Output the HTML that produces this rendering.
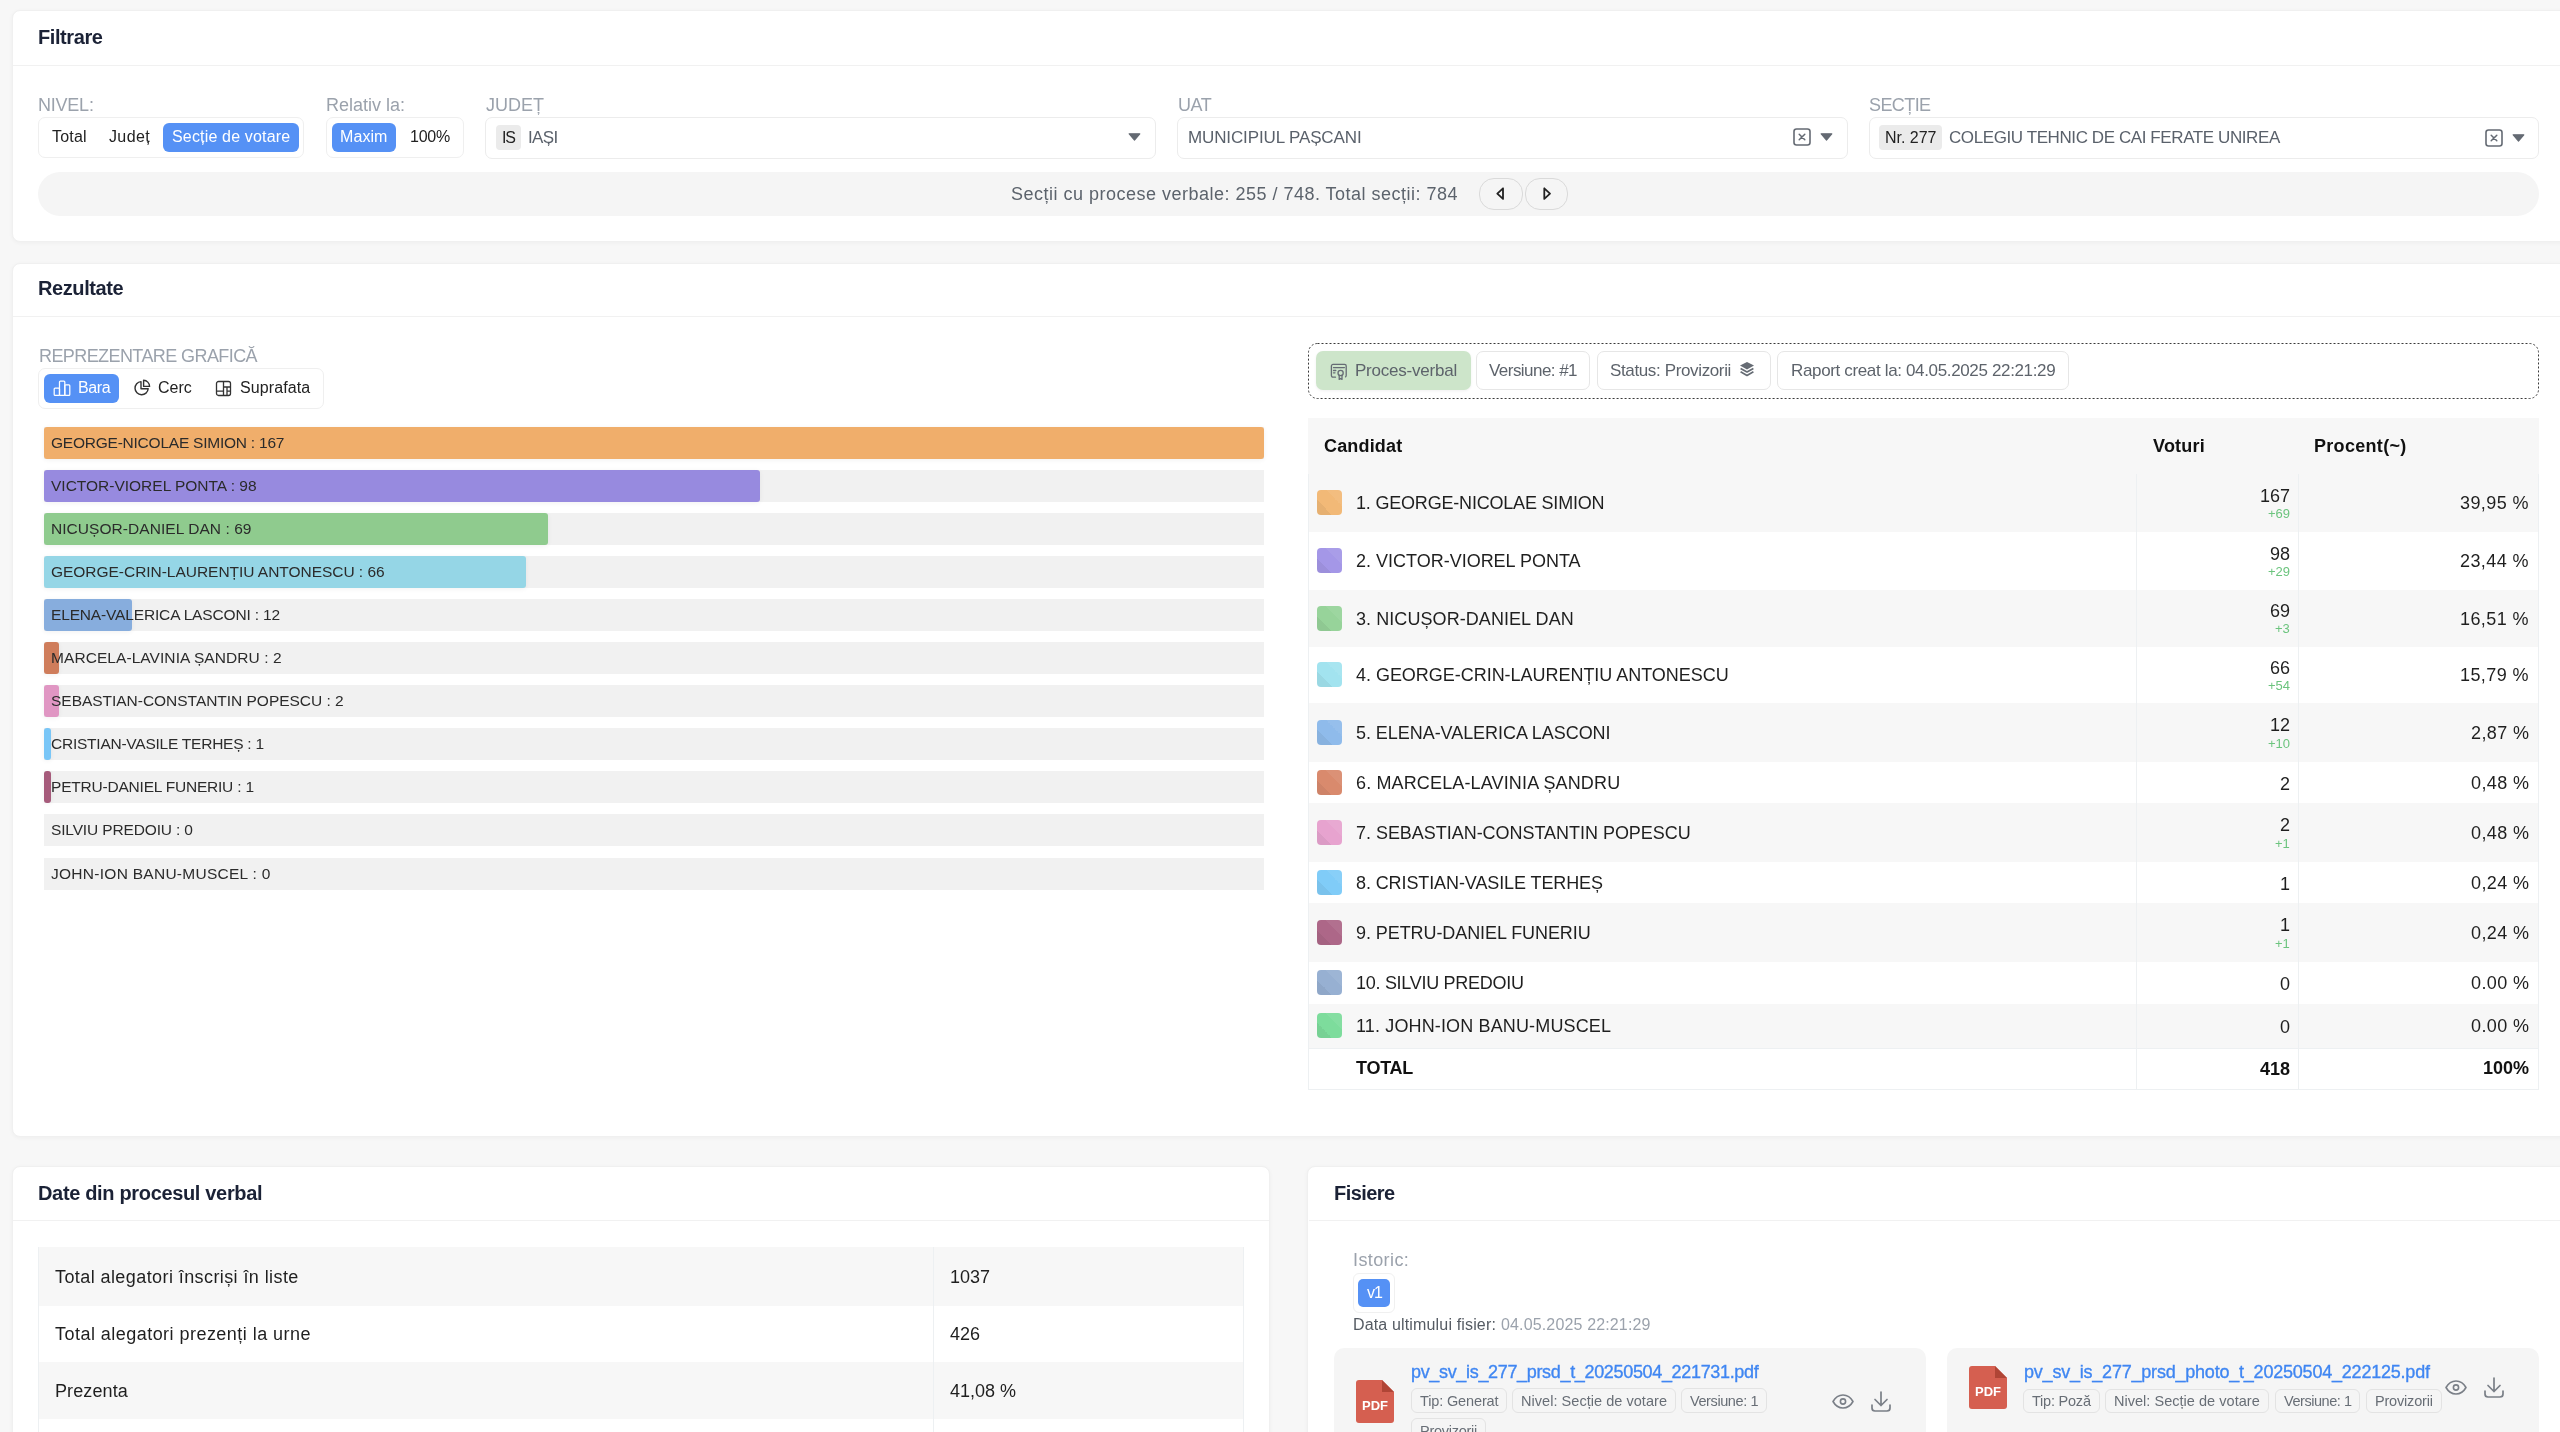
<!DOCTYPE html>
<html><head><meta charset="utf-8"><title>Rezultate</title>
<style>
html,body{margin:0;padding:0;}
body{width:2560px;height:1432px;overflow:hidden;background:#f7f7f7;position:relative;font-family:"Liberation Sans",sans-serif;}
.t{position:absolute;white-space:pre;will-change:transform;}
.b{position:absolute;}
</style></head><body>
<div class=b style="left:12px;top:10px;width:2588px;height:232px;background:#fff;border-radius:8px;box-shadow:0 1px 4px rgba(0,0,0,0.04);border:1px solid #f0f0f0;box-sizing:border-box;"></div><div class=b style="left:13px;top:65px;width:2587px;height:1px;background:#f1f1f1"></div><div class=b style="left:12px;top:263px;width:2588px;height:874px;background:#fff;border-radius:8px;box-shadow:0 1px 4px rgba(0,0,0,0.04);border:1px solid #f0f0f0;box-sizing:border-box;"></div><div class=b style="left:13px;top:316px;width:2587px;height:1px;background:#f1f1f1"></div><div class=b style="left:12px;top:1166px;width:1258px;height:334px;background:#fff;border-radius:8px;box-shadow:0 1px 4px rgba(0,0,0,0.04);border:1px solid #f0f0f0;box-sizing:border-box;"></div><div class=b style="left:13px;top:1220px;width:1256px;height:1px;background:#f1f1f1"></div><div class=b style="left:1307px;top:1166px;width:1293px;height:334px;background:#fff;border-radius:8px;box-shadow:0 1px 4px rgba(0,0,0,0.04);border:1px solid #f0f0f0;box-sizing:border-box;"></div><div class=b style="left:1309px;top:1220px;width:1291px;height:1px;background:#f1f1f1"></div><div class=t style="top:24.57px;font-size:20px;line-height:25px;font-weight:600;color:#1b2236;letter-spacing:-0.414px;left:38px;">Filtrare</div><div class=t style="top:276.17px;font-size:20px;line-height:25px;font-weight:600;color:#1b2236;letter-spacing:-0.412px;left:38px;">Rezultate</div><div class=t style="top:1180.57px;font-size:20px;line-height:25px;font-weight:600;color:#1b2236;letter-spacing:-0.337px;left:38px;">Date din procesul verbal</div><div class=t style="top:1180.87px;font-size:20px;line-height:25px;font-weight:600;color:#1b2236;letter-spacing:-0.555px;left:1334px;">Fisiere</div><div class=t style="top:93.56px;font-size:18px;line-height:22px;font-weight:400;color:#9ba2ac;letter-spacing:-0.222px;left:38px;">NIVEL:</div><div class=t style="top:93.66px;font-size:18px;line-height:22px;font-weight:400;color:#9ba2ac;letter-spacing:-0.003px;left:326.4px;">Relativ la:</div><div class=t style="top:93.66px;font-size:18px;line-height:22px;font-weight:400;color:#9ba2ac;left:485.6px;">JUDEȚ</div><div class=t style="top:93.66px;font-size:18px;line-height:22px;font-weight:400;color:#9ba2ac;letter-spacing:-0.424px;left:1177.5px;">UAT</div><div class=t style="top:93.66px;font-size:18px;line-height:22px;font-weight:400;color:#9ba2ac;letter-spacing:-0.586px;left:1869px;">SECȚIE</div><div class=b style="left:38px;top:117px;width:266px;height:41px;border:1px solid #efefef;border-radius:7px;box-sizing:border-box;background:#fff;"></div><div class=b style="left:163px;top:123px;width:136px;height:29px;background:#5591f5;border-radius:6px"></div><div class=t style="top:127.26px;font-size:16px;line-height:20px;font-weight:400;color:#222;letter-spacing:0.181px;left:52.3px;">Total</div><div class=t style="top:127.26px;font-size:16px;line-height:20px;font-weight:400;color:#222;letter-spacing:0.372px;left:109px;">Județ</div><div class=t style="top:127.26px;font-size:16px;line-height:20px;font-weight:400;color:#fff;letter-spacing:0.167px;left:172.2px;">Secție de votare</div><div class=b style="left:326px;top:117px;width:138px;height:41px;border:1px solid #efefef;border-radius:7px;box-sizing:border-box;background:#fff;"></div><div class=b style="left:332px;top:123px;width:64px;height:29px;background:#5591f5;border-radius:6px"></div><div class=t style="top:127.26px;font-size:16px;line-height:20px;font-weight:400;color:#fff;letter-spacing:0.078px;left:339.9px;">Maxim</div><div class=t style="top:127.26px;font-size:16px;line-height:20px;font-weight:400;color:#222;letter-spacing:-0.230px;left:409.6px;">100%</div><div class=b style="left:485px;top:117px;width:671px;height:42px;border:1px solid #ececec;border-radius:7px;box-sizing:border-box;background:#fff;"></div><div class=b style="left:496px;top:125px;width:25px;height:25px;background:#ebebeb;border-radius:4px"></div><div class=t style="top:127.76px;font-size:16px;line-height:20px;font-weight:400;color:#222;letter-spacing:-1.112px;left:501.6px;">IS</div><div class=t style="top:127.01px;font-size:17px;line-height:21px;font-weight:400;color:#5a616b;letter-spacing:-0.606px;left:527.6px;">IAȘI</div><svg class=b style='left:1127.5px;top:133px' width='13' height='8' viewBox='0 0 13 8'><path d='M1.2 0.8 H11.8 L6.5 7 Z' fill='#646a73' stroke='#646a73' stroke-width='1.2' stroke-linejoin='round'/></svg><div class=b style="left:1177px;top:117px;width:671px;height:42px;border:1px solid #ececec;border-radius:7px;box-sizing:border-box;background:#fff;"></div><div class=t style="top:127.01px;font-size:17px;line-height:21px;font-weight:400;color:#5a616b;letter-spacing:-0.122px;left:1188.4px;">MUNICIPIUL PAȘCANI</div><svg class=b style='left:1793px;top:128px' width='18' height='18' viewBox='0 0 18 18'><rect x='1' y='1' width='16' height='16' rx='2.5' fill='none' stroke='#646a73' stroke-width='1.6'/><path d='M6.2 6.2 L11.8 11.8 M11.8 6.2 L6.2 11.8' stroke='#646a73' stroke-width='1.5' stroke-linecap='round'/></svg><svg class=b style='left:1820px;top:133px' width='13' height='8' viewBox='0 0 13 8'><path d='M1.2 0.8 H11.8 L6.5 7 Z' fill='#646a73' stroke='#646a73' stroke-width='1.2' stroke-linejoin='round'/></svg><div class=b style="left:1869px;top:117px;width:670px;height:42px;border:1px solid #ececec;border-radius:7px;box-sizing:border-box;background:#fff;"></div><div class=b style="left:1879px;top:125px;width:63px;height:25px;background:#ebebeb;border-radius:4px"></div><div class=t style="top:127.76px;font-size:16px;line-height:20px;font-weight:400;color:#222;letter-spacing:-0.028px;left:1884.6px;">Nr. 277</div><div class=t style="top:127.21px;font-size:17px;line-height:21px;font-weight:400;color:#5a616b;letter-spacing:-0.408px;left:1948.9px;">COLEGIU TEHNIC DE CAI FERATE UNIREA</div><svg class=b style='left:2485px;top:129px' width='18' height='18' viewBox='0 0 18 18'><rect x='1' y='1' width='16' height='16' rx='2.5' fill='none' stroke='#646a73' stroke-width='1.6'/><path d='M6.2 6.2 L11.8 11.8 M11.8 6.2 L6.2 11.8' stroke='#646a73' stroke-width='1.5' stroke-linecap='round'/></svg><svg class=b style='left:2512px;top:134px' width='13' height='8' viewBox='0 0 13 8'><path d='M1.2 0.8 H11.8 L6.5 7 Z' fill='#646a73' stroke='#646a73' stroke-width='1.2' stroke-linejoin='round'/></svg><div class=b style="left:38px;top:172px;width:2501px;height:44px;background:#f5f5f5;border-radius:22px"></div><div class=t style="top:182.56px;font-size:18px;line-height:22px;font-weight:400;color:#5c636c;letter-spacing:0.492px;left:1011px;">Secții cu procese verbale: 255 / 748. Total secții: 784</div><div class=b style="left:1479px;top:178px;width:44px;height:32px;border:1px solid #dadada;border-radius:15px;box-sizing:border-box;"></div><div class=b style="left:1525px;top:178px;width:43px;height:32px;border:1px solid #dadada;border-radius:15px;box-sizing:border-box;"></div><svg class=b style='left:1495px;top:186px' width='10' height='15' viewBox='0 0 10 15'><path d='M8 2.3 L8 12.9 L2.3 7.6 Z' fill='none' stroke='#222' stroke-width='1.8' stroke-linejoin='round'/></svg><svg class=b style='left:1542px;top:186px' width='10' height='15' viewBox='0 0 10 15'><path d='M2.3 2.3 L2.3 12.9 L8 7.6 Z' fill='none' stroke='#222' stroke-width='1.8' stroke-linejoin='round'/></svg><div class=t style="top:344.66px;font-size:18px;line-height:22px;font-weight:400;color:#9ba2ac;letter-spacing:-0.585px;left:38.8px;">REPREZENTARE GRAFICĂ</div><div class=b style="left:38px;top:368px;width:286px;height:41px;border:1px solid #efefef;border-radius:7px;box-sizing:border-box;background:#fff;"></div><div class=b style="left:44px;top:374px;width:75px;height:29px;background:#5591f5;border-radius:6px"></div><svg class=b style='left:53px;top:380px' width='18' height='17' viewBox='0 0 18 17'><g fill='none' stroke='#fff' stroke-width='1.25' stroke-linejoin='round'><rect x='1.2' y='8.2' width='5.3' height='7.2' rx='0.9'/><rect x='6.5' y='1.2' width='5.3' height='14.2' rx='0.9'/><rect x='11.8' y='4.8' width='5' height='10.6' rx='0.9'/></g></svg><div class=t style="top:378.46px;font-size:16px;line-height:20px;font-weight:400;color:#fff;letter-spacing:-0.374px;left:78px;">Bara</div><svg class=b style='left:133px;top:379px' width='18' height='18' viewBox='0 0 18 18'><g fill='none' stroke='#333' stroke-width='1.4' stroke-linejoin='round'><path d='M8 2.6 A6.6 6.6 0 1 0 15.2 9.8 H8 Z'/><path d='M10.6 1.2 V7.4 H16.6 A6.4 6.4 0 0 0 10.6 1.2 Z'/></g></svg><div class=t style="top:378.46px;font-size:16px;line-height:20px;font-weight:400;color:#222;letter-spacing:-0.020px;left:158px;">Cerc</div><svg class=b style='left:215px;top:380px' width='17' height='17' viewBox='0 0 17 17'><g fill='none' stroke='#333' stroke-width='1.3' stroke-linejoin='round'><rect x='1.5' y='1.5' width='14' height='14' rx='2'/><path d='M8.5 1.5 V15.5 M1.5 11.2 H8.5 M8.5 7 H15.5 M12 7 V15.5 M12 11.2 H15.5'/></g></svg><div class=t style="top:378.46px;font-size:16px;line-height:20px;font-weight:400;color:#222;letter-spacing:0.090px;left:239.8px;">Suprafata</div><div class=b style="left:44px;top:427px;width:1220px;height:32px;background:#f1f1f1"></div><div class=b style="left:44px;top:427px;width:1220.0px;height:32px;background:#f0ae6b;border-radius:3px;box-shadow:0 1px 5px rgba(0,0,0,0.06)"></div><div class=t style="top:432.63px;font-size:15.5px;line-height:19px;font-weight:400;color:#2b2b2b;letter-spacing:-0.232px;left:51px;">GEORGE-NICOLAE SIMION : 167</div><div class=b style="left:44px;top:470px;width:1220px;height:32px;background:#f1f1f1"></div><div class=b style="left:44px;top:470px;width:715.9px;height:32px;background:#978adf;border-radius:3px;box-shadow:0 1px 5px rgba(0,0,0,0.06)"></div><div class=t style="top:475.63px;font-size:15.5px;line-height:19px;font-weight:400;color:#2b2b2b;letter-spacing:-0.003px;left:51px;">VICTOR-VIOREL PONTA : 98</div><div class=b style="left:44px;top:513px;width:1220px;height:32px;background:#f1f1f1"></div><div class=b style="left:44px;top:513px;width:504.1px;height:32px;background:#8fcb8e;border-radius:3px;box-shadow:0 1px 5px rgba(0,0,0,0.06)"></div><div class=t style="top:518.63px;font-size:15.5px;line-height:19px;font-weight:400;color:#2b2b2b;letter-spacing:0.054px;left:51px;">NICUȘOR-DANIEL DAN : 69</div><div class=b style="left:44px;top:556px;width:1220px;height:32px;background:#f1f1f1"></div><div class=b style="left:44px;top:556px;width:482.20000000000005px;height:32px;background:#95d6e6;border-radius:3px;box-shadow:0 1px 5px rgba(0,0,0,0.06)"></div><div class=t style="top:561.63px;font-size:15.5px;line-height:19px;font-weight:400;color:#2b2b2b;letter-spacing:-0.032px;left:51px;">GEORGE-CRIN-LAURENȚIU ANTONESCU : 66</div><div class=b style="left:44px;top:599px;width:1220px;height:32px;background:#f1f1f1"></div><div class=b style="left:44px;top:599px;width:87.69999999999999px;height:32px;background:#87addd;border-radius:3px;box-shadow:0 1px 5px rgba(0,0,0,0.06)"></div><div class=t style="top:604.63px;font-size:15.5px;line-height:19px;font-weight:400;color:#2b2b2b;letter-spacing:-0.155px;left:51px;">ELENA-VALERICA LASCONI : 12</div><div class=b style="left:44px;top:642px;width:1220px;height:32px;background:#f1f1f1"></div><div class=b style="left:44px;top:642px;width:14.600000000000001px;height:32px;background:#cf7d5b;border-radius:3px;box-shadow:0 1px 5px rgba(0,0,0,0.06)"></div><div class=t style="top:647.63px;font-size:15.5px;line-height:19px;font-weight:400;color:#2b2b2b;letter-spacing:0.068px;left:51px;">MARCELA-LAVINIA ȘANDRU : 2</div><div class=b style="left:44px;top:685px;width:1220px;height:32px;background:#f1f1f1"></div><div class=b style="left:44px;top:685px;width:14.600000000000001px;height:32px;background:#e096c3;border-radius:3px;box-shadow:0 1px 5px rgba(0,0,0,0.06)"></div><div class=t style="top:690.63px;font-size:15.5px;line-height:19px;font-weight:400;color:#2b2b2b;letter-spacing:-0.025px;left:51px;">SEBASTIAN-CONSTANTIN POPESCU : 2</div><div class=b style="left:44px;top:728px;width:1220px;height:32px;background:#f1f1f1"></div><div class=b style="left:44px;top:728px;width:7.299999999999997px;height:32px;background:#79c6f7;border-radius:3px;box-shadow:0 1px 5px rgba(0,0,0,0.06)"></div><div class=t style="top:733.63px;font-size:15.5px;line-height:19px;font-weight:400;color:#2b2b2b;letter-spacing:-0.238px;left:51px;">CRISTIAN-VASILE TERHEȘ : 1</div><div class=b style="left:44px;top:771px;width:1220px;height:32px;background:#f1f1f1"></div><div class=b style="left:44px;top:771px;width:7.299999999999997px;height:32px;background:#a65b7b;border-radius:3px;box-shadow:0 1px 5px rgba(0,0,0,0.06)"></div><div class=t style="top:776.63px;font-size:15.5px;line-height:19px;font-weight:400;color:#2b2b2b;letter-spacing:-0.210px;left:51px;">PETRU-DANIEL FUNERIU : 1</div><div class=b style="left:44px;top:814px;width:1220px;height:32px;background:#f1f1f1"></div><div class=t style="top:819.63px;font-size:15.5px;line-height:19px;font-weight:400;color:#2b2b2b;letter-spacing:-0.146px;left:51px;">SILVIU PREDOIU : 0</div><div class=b style="left:44px;top:858px;width:1220px;height:32px;background:#f1f1f1"></div><div class=t style="top:863.63px;font-size:15.5px;line-height:19px;font-weight:400;color:#2b2b2b;letter-spacing:0.274px;left:51px;">JOHN-ION BANU-MUSCEL : 0</div><svg class=b style='left:1308px;top:343px' width='1231' height='56'><rect x='0.5' y='0.5' width='1230' height='55' rx='9' fill='none' stroke='#3a3a3a' stroke-width='1' stroke-dasharray='2 2'/></svg><div class=b style="left:1316px;top:351px;width:155px;height:39px;background:#cde5ca;border-radius:7px;box-shadow:0 1px 3px rgba(0,0,0,0.06)"></div><svg class=b style='left:1330px;top:363px' width='18' height='18' viewBox='0 0 18 18'><g fill='none' stroke='#666c74' stroke-width='1.3' stroke-linecap='round' stroke-linejoin='round'><path d='M5.5 14.2 H3 A1.6 1.6 0 0 1 1.4 12.6 V3 A1.6 1.6 0 0 1 3 1.4 H14.6 A1.6 1.6 0 0 1 16.2 3 V12.6 A1.6 1.6 0 0 1 15.6 13.8'/><path d='M3.5 4.6 H14.4 M3.5 7.5 H5.8 M3.5 9.8 H5'/><circle cx='10.6' cy='10' r='2.6'/><path d='M9.2 12.2 V16.4 L10.6 15.5 L12 16.4 V12.2'/></g></svg><div class=t style="top:360.11px;font-size:17px;line-height:21px;font-weight:400;color:#5d636b;letter-spacing:-0.221px;left:1354.9px;">Proces-verbal</div><div class=b style="left:1476px;top:351px;width:114px;height:39px;border:1px solid #e6e6e6;border-radius:7px;box-sizing:border-box;background:#fff;"></div><div class=t style="top:360.11px;font-size:17px;line-height:21px;font-weight:400;color:#5d636b;letter-spacing:-0.543px;left:1489.4px;">Versiune: #1</div><div class=b style="left:1597px;top:351px;width:174px;height:39px;border:1px solid #e6e6e6;border-radius:7px;box-sizing:border-box;background:#fff;"></div><div class=t style="top:360.11px;font-size:17px;line-height:21px;font-weight:400;color:#5d636b;letter-spacing:-0.364px;left:1610.3px;">Status: Provizorii</div><svg class=b style='left:1739px;top:361px' width='16' height='17' viewBox='0 0 16 17'><g fill='#666c74'><path d='M8 1 L15 4.6 L8 8.4 L1 4.6 Z'/></g><g fill='none' stroke='#666c74' stroke-width='1.7' stroke-linejoin='round'><path d='M1.6 7.6 L8 11 L14.4 7.6'/><path d='M1.6 10.8 L8 14.4 L14.4 10.8'/></g></svg><div class=b style="left:1777px;top:351px;width:292px;height:39px;border:1px solid #e6e6e6;border-radius:7px;box-sizing:border-box;background:#fff;"></div><div class=t style="top:360.11px;font-size:17px;line-height:21px;font-weight:400;color:#5d636b;letter-spacing:-0.351px;left:1790.6px;">Raport creat la: 04.05.2025 22:21:29</div><div class=b style="left:1308px;top:418px;width:1231px;height:56px;background:#f7f7f7"></div><div class=b style="left:1308px;top:474px;width:1231px;height:1px;background:#edf0f2"></div><div class=t style="top:435.16px;font-size:18px;line-height:22px;font-weight:700;color:#111;letter-spacing:0.161px;left:1324.3px;">Candidat</div><div class=t style="top:435.46px;font-size:18px;line-height:22px;font-weight:700;color:#111;letter-spacing:0.221px;left:2153px;">Voturi</div><div class=t style="top:435.46px;font-size:18px;line-height:22px;font-weight:700;color:#111;letter-spacing:0.307px;left:2314.4px;">Procent(~)</div><div class=b style="left:1308px;top:474px;width:1231px;height:58px;background:#f7f7f7"></div><div class=b style="left:1308px;top:532px;width:1231px;height:1px;background:#edf0f2"></div><div class=b style="left:1317px;top:490px;width:25px;height:25px;background:linear-gradient(45deg,#e6b071 0 30%,#f2b977 30% 68%,#f3bd7f 68% 100%);border-radius:4px"></div><div class=t style="top:492.26px;font-size:18px;line-height:22px;font-weight:400;color:#1f1f1f;letter-spacing:-0.194px;left:1355.6px;">1. GEORGE-NICOLAE SIMION</div><div class=t style="top:484.76px;font-size:18px;line-height:22px;font-weight:400;color:#1f1f1f;left:2259.95px;">167</div><div class=t style="top:506.00px;font-size:13px;line-height:16px;font-weight:400;color:#6cc47e;left:2267.94px;">+69</div><div class=t style="top:492.26px;font-size:18px;line-height:22px;font-weight:400;color:#1f1f1f;letter-spacing:0.420px;left:2460.00px;">39,95 %</div><div class=b style="left:1308px;top:532px;width:1231px;height:58px;background:#fff"></div><div class=b style="left:1308px;top:590px;width:1231px;height:1px;background:#edf0f2"></div><div class=b style="left:1317px;top:548px;width:25px;height:25px;background:linear-gradient(45deg,#9c8fdb 0 30%,#a497e7 30% 68%,#a99de8 68% 100%);border-radius:4px"></div><div class=t style="top:550.01px;font-size:18px;line-height:22px;font-weight:400;color:#1f1f1f;letter-spacing:-0.005px;left:1355.6px;">2. VICTOR-VIOREL PONTA</div><div class=t style="top:542.51px;font-size:18px;line-height:22px;font-weight:400;color:#1f1f1f;left:2269.97px;">98</div><div class=t style="top:563.75px;font-size:13px;line-height:16px;font-weight:400;color:#6cc47e;left:2267.94px;">+29</div><div class=t style="top:550.01px;font-size:18px;line-height:22px;font-weight:400;color:#1f1f1f;letter-spacing:0.420px;left:2460.00px;">23,44 %</div><div class=b style="left:1308px;top:590px;width:1231px;height:57px;background:#f7f7f7"></div><div class=b style="left:1308px;top:647px;width:1231px;height:1px;background:#edf0f2"></div><div class=b style="left:1317px;top:606px;width:25px;height:25px;background:linear-gradient(45deg,#8fc892 0 30%,#97d39a 30% 68%,#9dd6a0 68% 100%);border-radius:4px"></div><div class=t style="top:607.51px;font-size:18px;line-height:22px;font-weight:400;color:#1f1f1f;letter-spacing:0.068px;left:1355.6px;">3. NICUȘOR-DANIEL DAN</div><div class=t style="top:600.01px;font-size:18px;line-height:22px;font-weight:400;color:#1f1f1f;left:2269.97px;">69</div><div class=t style="top:621.25px;font-size:13px;line-height:16px;font-weight:400;color:#6cc47e;left:2275.17px;">+3</div><div class=t style="top:607.51px;font-size:18px;line-height:22px;font-weight:400;color:#1f1f1f;letter-spacing:0.420px;left:2460.00px;">16,51 %</div><div class=b style="left:1308px;top:647px;width:1231px;height:56px;background:#fff"></div><div class=b style="left:1308px;top:703px;width:1231px;height:1px;background:#edf0f2"></div><div class=b style="left:1317px;top:662px;width:25px;height:25px;background:linear-gradient(45deg,#9ad8e3 0 30%,#a2e3ef 30% 68%,#a8e5f0 68% 100%);border-radius:4px"></div><div class=t style="top:664.26px;font-size:18px;line-height:22px;font-weight:400;color:#1f1f1f;letter-spacing:-0.030px;left:1355.6px;">4. GEORGE-CRIN-LAURENȚIU ANTONESCU</div><div class=t style="top:656.76px;font-size:18px;line-height:22px;font-weight:400;color:#1f1f1f;left:2269.97px;">66</div><div class=t style="top:678.00px;font-size:13px;line-height:16px;font-weight:400;color:#6cc47e;left:2267.94px;">+54</div><div class=t style="top:664.26px;font-size:18px;line-height:22px;font-weight:400;color:#1f1f1f;letter-spacing:0.420px;left:2460.00px;">15,79 %</div><div class=b style="left:1308px;top:703px;width:1231px;height:59px;background:#f7f7f7"></div><div class=b style="left:1308px;top:762px;width:1231px;height:1px;background:#edf0f2"></div><div class=b style="left:1317px;top:720px;width:25px;height:25px;background:linear-gradient(45deg,#88b2df 0 30%,#8fbbeb 30% 68%,#96bfec 68% 100%);border-radius:4px"></div><div class=t style="top:721.76px;font-size:18px;line-height:22px;font-weight:400;color:#1f1f1f;letter-spacing:-0.051px;left:1355.6px;">5. ELENA-VALERICA LASCONI</div><div class=t style="top:714.26px;font-size:18px;line-height:22px;font-weight:400;color:#1f1f1f;left:2269.97px;">12</div><div class=t style="top:735.50px;font-size:13px;line-height:16px;font-weight:400;color:#6cc47e;left:2267.94px;">+10</div><div class=t style="top:721.76px;font-size:18px;line-height:22px;font-weight:400;color:#1f1f1f;letter-spacing:0.409px;left:2470.50px;">2,87 %</div><div class=b style="left:1308px;top:762px;width:1231px;height:41px;background:#fff"></div><div class=b style="left:1308px;top:803px;width:1231px;height:1px;background:#edf0f2"></div><div class=b style="left:1317px;top:770px;width:25px;height:25px;background:linear-gradient(45deg,#ce8368 0 30%,#d98a6d 30% 68%,#db9176 68% 100%);border-radius:4px"></div><div class=t style="top:771.76px;font-size:18px;line-height:22px;font-weight:400;color:#1f1f1f;letter-spacing:0.142px;left:1355.6px;">6. MARCELA-LAVINIA ȘANDRU</div><div class=t style="top:772.76px;font-size:18px;line-height:22px;font-weight:400;color:#1f1f1f;left:2279.98px;">2</div><div class=t style="top:771.76px;font-size:18px;line-height:22px;font-weight:400;color:#1f1f1f;letter-spacing:0.409px;left:2470.50px;">0,48 %</div><div class=b style="left:1308px;top:803px;width:1231px;height:59px;background:#f7f7f7"></div><div class=b style="left:1308px;top:862px;width:1231px;height:1px;background:#edf0f2"></div><div class=b style="left:1317px;top:820px;width:25px;height:25px;background:linear-gradient(45deg,#db9bc5 0 30%,#e7a3cf 30% 68%,#e8a9d2 68% 100%);border-radius:4px"></div><div class=t style="top:821.76px;font-size:18px;line-height:22px;font-weight:400;color:#1f1f1f;letter-spacing:-0.033px;left:1355.6px;">7. SEBASTIAN-CONSTANTIN POPESCU</div><div class=t style="top:814.26px;font-size:18px;line-height:22px;font-weight:400;color:#1f1f1f;left:2279.98px;">2</div><div class=t style="top:835.50px;font-size:13px;line-height:16px;font-weight:400;color:#6cc47e;left:2275.17px;">+1</div><div class=t style="top:821.76px;font-size:18px;line-height:22px;font-weight:400;color:#1f1f1f;letter-spacing:0.409px;left:2470.50px;">0,48 %</div><div class=b style="left:1308px;top:862px;width:1231px;height:41px;background:#fff"></div><div class=b style="left:1308px;top:903px;width:1231px;height:1px;background:#edf0f2"></div><div class=b style="left:1317px;top:870px;width:25px;height:25px;background:linear-gradient(45deg,#7ac2ec 0 30%,#80ccf8 30% 68%,#88cff8 68% 100%);border-radius:4px"></div><div class=t style="top:871.76px;font-size:18px;line-height:22px;font-weight:400;color:#1f1f1f;letter-spacing:-0.100px;left:1355.6px;">8. CRISTIAN-VASILE TERHEȘ</div><div class=t style="top:872.76px;font-size:18px;line-height:22px;font-weight:400;color:#1f1f1f;left:2279.98px;">1</div><div class=t style="top:871.76px;font-size:18px;line-height:22px;font-weight:400;color:#1f1f1f;letter-spacing:0.409px;left:2470.50px;">0,24 %</div><div class=b style="left:1308px;top:903px;width:1231px;height:59px;background:#f7f7f7"></div><div class=b style="left:1308px;top:962px;width:1231px;height:1px;background:#edf0f2"></div><div class=b style="left:1317px;top:920px;width:25px;height:25px;background:linear-gradient(45deg,#a46281 0 30%,#ad6788 30% 68%,#b2708f 68% 100%);border-radius:4px"></div><div class=t style="top:921.76px;font-size:18px;line-height:22px;font-weight:400;color:#1f1f1f;letter-spacing:-0.077px;left:1355.6px;">9. PETRU-DANIEL FUNERIU</div><div class=t style="top:914.26px;font-size:18px;line-height:22px;font-weight:400;color:#1f1f1f;left:2279.98px;">1</div><div class=t style="top:935.50px;font-size:13px;line-height:16px;font-weight:400;color:#6cc47e;left:2275.17px;">+1</div><div class=t style="top:921.76px;font-size:18px;line-height:22px;font-weight:400;color:#1f1f1f;letter-spacing:0.409px;left:2470.50px;">0,24 %</div><div class=b style="left:1308px;top:962px;width:1231px;height:42px;background:#fff"></div><div class=b style="left:1308px;top:1004px;width:1231px;height:1px;background:#edf0f2"></div><div class=b style="left:1317px;top:970px;width:25px;height:25px;background:linear-gradient(45deg,#8fa7c8 0 30%,#97b0d2 30% 68%,#9db5d5 68% 100%);border-radius:4px"></div><div class=t style="top:972.01px;font-size:18px;line-height:22px;font-weight:400;color:#1f1f1f;letter-spacing:-0.285px;left:1355.6px;">10. SILVIU PREDOIU</div><div class=t style="top:973.01px;font-size:18px;line-height:22px;font-weight:400;color:#1f1f1f;left:2279.98px;">0</div><div class=t style="top:972.01px;font-size:18px;line-height:22px;font-weight:400;color:#1f1f1f;letter-spacing:0.409px;left:2470.50px;">0.00 %</div><div class=b style="left:1308px;top:1004px;width:1231px;height:44px;background:#f7f7f7"></div><div class=b style="left:1308px;top:1048px;width:1231px;height:1px;background:#edf0f2"></div><div class=b style="left:1317px;top:1013px;width:25px;height:25px;background:linear-gradient(45deg,#77d194 0 30%,#7ddc9c 30% 68%,#85dea2 68% 100%);border-radius:4px"></div><div class=t style="top:1014.76px;font-size:18px;line-height:22px;font-weight:400;color:#1f1f1f;letter-spacing:0.142px;left:1355.6px;">11. JOHN-ION BANU-MUSCEL</div><div class=t style="top:1015.76px;font-size:18px;line-height:22px;font-weight:400;color:#1f1f1f;left:2279.98px;">0</div><div class=t style="top:1014.76px;font-size:18px;line-height:22px;font-weight:400;color:#1f1f1f;letter-spacing:0.409px;left:2470.50px;">0.00 %</div><div class=t style="top:1057.26px;font-size:18px;line-height:22px;font-weight:700;color:#111;letter-spacing:-0.266px;left:1355.6px;">TOTAL</div><div class=t style="top:1057.76px;font-size:18px;line-height:22px;font-weight:700;color:#111;left:2259.95px;">418</div><div class=t style="top:1057.26px;font-size:18px;line-height:22px;font-weight:700;color:#111;left:2482.95px;">100%</div><div class=b style="left:1308px;top:1089px;width:1231px;height:1px;background:#edf0f2"></div><div class=b style="left:1308px;top:474px;width:1px;height:616px;background:#edf0f2"></div><div class=b style="left:2538px;top:474px;width:1px;height:616px;background:#edf0f2"></div><div class=b style="left:2136px;top:474px;width:1px;height:616px;background:#edf0f2"></div><div class=b style="left:2298px;top:474px;width:1px;height:616px;background:#edf0f2"></div><div class=b style="left:38px;top:1247px;width:1206px;height:59px;background:#f7f7f7"></div><div class=b style="left:38px;top:1306px;width:1206px;height:1px;background:#edf0f2"></div><div class=t style="top:1265.51px;font-size:18px;line-height:22px;font-weight:400;color:#1f1f1f;letter-spacing:0.415px;left:55px;">Total alegatori înscriși în liste</div><div class=t style="top:1265.51px;font-size:18px;line-height:22px;font-weight:400;color:#1f1f1f;left:950px;">1037</div><div class=b style="left:38px;top:1306px;width:1206px;height:56px;background:#fff"></div><div class=b style="left:38px;top:1362px;width:1206px;height:1px;background:#edf0f2"></div><div class=t style="top:1323.01px;font-size:18px;line-height:22px;font-weight:400;color:#1f1f1f;letter-spacing:0.464px;left:55px;">Total alegatori prezenți la urne</div><div class=t style="top:1323.01px;font-size:18px;line-height:22px;font-weight:400;color:#1f1f1f;left:950px;">426</div><div class=b style="left:38px;top:1362px;width:1206px;height:57px;background:#f7f7f7"></div><div class=b style="left:38px;top:1419px;width:1206px;height:1px;background:#edf0f2"></div><div class=t style="top:1379.76px;font-size:18px;line-height:22px;font-weight:400;color:#1f1f1f;letter-spacing:0.119px;left:55px;">Prezenta</div><div class=t style="top:1379.76px;font-size:18px;line-height:22px;font-weight:400;color:#1f1f1f;left:950px;">41,08 %</div><div class=b style="left:38px;top:1419px;width:1206px;height:57px;background:#fff"></div><div class=b style="left:38px;top:1476px;width:1206px;height:1px;background:#edf0f2"></div><div class=b style="left:38px;top:1476px;width:1206px;height:57px;background:#f7f7f7"></div><div class=b style="left:38px;top:1533px;width:1206px;height:1px;background:#edf0f2"></div><div class=b style="left:38px;top:1247px;width:1px;height:253px;background:#edf0f2"></div><div class=b style="left:1243px;top:1247px;width:1px;height:253px;background:#edf0f2"></div><div class=b style="left:933px;top:1247px;width:1px;height:253px;background:#edf0f2"></div><div class=t style="top:1248.66px;font-size:18px;line-height:22px;font-weight:400;color:#9ba2ac;letter-spacing:0.398px;left:1353.2px;">Istoric:</div><div class=b style="left:1353px;top:1273px;width:42px;height:40px;border:1px solid #f0f0f0;border-radius:6px;box-sizing:border-box"></div><div class=b style="left:1358px;top:1279px;width:32px;height:28px;background:#5591f5;border-radius:5px"></div><div class=t style="top:1283.46px;font-size:16px;line-height:20px;font-weight:400;color:#fff;letter-spacing:-0.953px;left:1367px;">v1</div><div class=t style="top:1314.76px;font-size:16px;line-height:20px;font-weight:400;color:#555b63;letter-spacing:0.154px;left:1353px;">Data ultimului fisier:</div><div class=t style="top:1314.76px;font-size:16px;line-height:20px;font-weight:400;color:#9ba2ac;letter-spacing:0.147px;left:1501.4px;">04.05.2025 22:21:29</div><div class=b style="left:1334px;top:1348px;width:592px;height:152px;background:#f5f5f5;border-radius:10px"></div><svg class=b style='left:1356px;top:1380px;will-change:transform' width='38' height='43' viewBox='0 0 38 43'><path d='M3 0 H26 L38 12 V40 A3 3 0 0 1 35 43 H3 A3 3 0 0 1 0 40 V3 A3 3 0 0 1 3 0 Z' fill='#d55f50'/><path d='M26 0 L38 12 H26 Z' fill='#b04536'/><text x='19' y='29.5' text-anchor='middle' font-family='Liberation Sans' font-weight='700' font-size='13' fill='#fff'>PDF</text></svg><div class=t style="top:1361.46px;font-size:18px;line-height:22px;font-weight:400;color:#3f86f2;letter-spacing:-0.331px;left:1410.6px;-webkit-text-stroke:0.35px #3f86f2">pv_sv_is_277_prsd_t_20250504_221731.pdf</div><div class=b style="left:1411px;top:1388px;width:96px;height:25px;border:1px solid #e3e3e3;border-radius:6px;box-sizing:border-box;"></div><div class=t style="top:1391.98px;font-size:14.5px;line-height:18px;font-weight:400;color:#686e76;letter-spacing:-0.139px;left:1419.6px;">Tip: Generat</div><div class=b style="left:1512px;top:1388px;width:164px;height:25px;border:1px solid #e3e3e3;border-radius:6px;box-sizing:border-box;"></div><div class=t style="top:1391.98px;font-size:14.5px;line-height:18px;font-weight:400;color:#686e76;letter-spacing:0.040px;left:1521.2px;">Nivel: Secție de votare</div><div class=b style="left:1681px;top:1388px;width:86px;height:25px;border:1px solid #e3e3e3;border-radius:6px;box-sizing:border-box;"></div><div class=t style="top:1391.98px;font-size:14.5px;line-height:18px;font-weight:400;color:#686e76;letter-spacing:-0.406px;left:1690.3px;">Versiune: 1</div><div class=b style="left:1411px;top:1418px;width:75px;height:25px;border:1px solid #e3e3e3;border-radius:6px;box-sizing:border-box;"></div><div class=t style="top:1421.98px;font-size:14.5px;line-height:18px;font-weight:400;color:#686e76;letter-spacing:-0.263px;left:1420px;">Provizorii</div><svg class=b style='left:1832px;top:1394px' width='22' height='15' viewBox='0 0 22 15'><g fill='none' stroke='#7a7f87' stroke-width='1.6' stroke-linecap='round' stroke-linejoin='round'><path d='M1 7.5 C4 2.2 7.5 1 11 1 C14.5 1 18 2.2 21 7.5 C18 12.8 14.5 14 11 14 C7.5 14 4 12.8 1 7.5 Z'/><circle cx='11' cy='7.5' r='2.6'/></g></svg><svg class=b style='left:1871px;top:1391px' width='20' height='21' viewBox='0 0 20 21'><g fill='none' stroke='#7a7f87' stroke-width='1.7' stroke-linecap='round' stroke-linejoin='round'><path d='M10 1 V14.5 M4 8.5 L10 14.5 L16 8.5'/><path d='M1 14 V17 A3 3 0 0 0 4 20 H16 A3 3 0 0 0 19 17 V14'/></g></svg><div class=b style="left:1947px;top:1348px;width:592px;height:152px;background:#f5f5f5;border-radius:10px"></div><svg class=b style='left:1969px;top:1366px;will-change:transform' width='38' height='43' viewBox='0 0 38 43'><path d='M3 0 H26 L38 12 V40 A3 3 0 0 1 35 43 H3 A3 3 0 0 1 0 40 V3 A3 3 0 0 1 3 0 Z' fill='#d55f50'/><path d='M26 0 L38 12 H26 Z' fill='#b04536'/><text x='19' y='29.5' text-anchor='middle' font-family='Liberation Sans' font-weight='700' font-size='13' fill='#fff'>PDF</text></svg><div class=t style="top:1361.06px;font-size:18px;line-height:22px;font-weight:400;color:#3f86f2;letter-spacing:-0.214px;left:2023.75px;-webkit-text-stroke:0.35px #3f86f2">pv_sv_is_277_prsd_photo_t_20250504_222125.pdf</div><div class=b style="left:2023px;top:1389px;width:77px;height:24px;border:1px solid #e3e3e3;border-radius:6px;box-sizing:border-box;"></div><div class=t style="top:1391.98px;font-size:14.5px;line-height:18px;font-weight:400;color:#686e76;letter-spacing:-0.219px;left:2032.25px;">Tip: Poză</div><div class=b style="left:2105px;top:1389px;width:164px;height:24px;border:1px solid #e3e3e3;border-radius:6px;box-sizing:border-box;"></div><div class=t style="top:1391.98px;font-size:14.5px;line-height:18px;font-weight:400;color:#686e76;letter-spacing:0.029px;left:2114px;">Nivel: Secție de votare</div><div class=b style="left:2275px;top:1389px;width:85px;height:24px;border:1px solid #e3e3e3;border-radius:6px;box-sizing:border-box;"></div><div class=t style="top:1391.98px;font-size:14.5px;line-height:18px;font-weight:400;color:#686e76;letter-spacing:-0.460px;left:2284px;">Versiune: 1</div><div class=b style="left:2366px;top:1389px;width:76px;height:24px;border:1px solid #e3e3e3;border-radius:6px;box-sizing:border-box;"></div><div class=t style="top:1391.98px;font-size:14.5px;line-height:18px;font-weight:400;color:#686e76;letter-spacing:-0.188px;left:2375.25px;">Provizorii</div><svg class=b style='left:2445px;top:1380px' width='22' height='15' viewBox='0 0 22 15'><g fill='none' stroke='#7a7f87' stroke-width='1.6' stroke-linecap='round' stroke-linejoin='round'><path d='M1 7.5 C4 2.2 7.5 1 11 1 C14.5 1 18 2.2 21 7.5 C18 12.8 14.5 14 11 14 C7.5 14 4 12.8 1 7.5 Z'/><circle cx='11' cy='7.5' r='2.6'/></g></svg><svg class=b style='left:2484px;top:1377px' width='20' height='21' viewBox='0 0 20 21'><g fill='none' stroke='#7a7f87' stroke-width='1.7' stroke-linecap='round' stroke-linejoin='round'><path d='M10 1 V14.5 M4 8.5 L10 14.5 L16 8.5'/><path d='M1 14 V17 A3 3 0 0 0 4 20 H16 A3 3 0 0 0 19 17 V14'/></g></svg>
</body></html>
